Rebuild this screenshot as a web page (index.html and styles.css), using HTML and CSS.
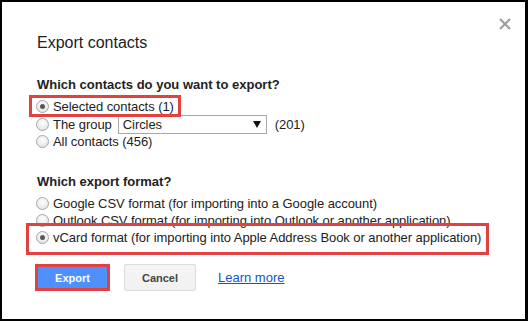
FILE: index.html
```html
<!DOCTYPE html>
<html>
<head>
<meta charset="utf-8">
<link rel="stylesheet" href="styles.css">
</head>
<body>
<div class="dialog">
  <div class="header">
    <div class="title">Export contacts</div>
    <svg class="close" width="12" height="12" viewBox="0 0 12 12"><path d="M1 1L11 11M11 1L1 11" stroke="#9e9e9e" stroke-width="2.2"/></svg>
  </div>

  <div class="heading first">Which contacts do you want to export?</div>
  <div class="options first">
    <div class="row">
      <label class="opt"><span class="radio on"></span>Selected contacts (1)<span class="mark m1"></span></label>
    </div>
    <div class="row group">
      <label class="opt"><span class="radio"></span>The group</label>
      <span class="select"><span>Circles</span><svg width="8" height="7" viewBox="0 0 8 7"><path d="M0 0H8L4 7Z" fill="#111"/></svg></span>
      <span class="count">(201)</span>
    </div>
    <div class="row">
      <label class="opt"><span class="radio"></span>All contacts (456)</label>
    </div>
  </div>

  <div class="heading second">Which export format?</div>
  <div class="options second">
    <div class="row">
      <label class="opt"><span class="radio"></span>Google CSV format (for importing into a Google account)</label>
    </div>
    <div class="row">
      <label class="opt"><span class="radio"></span>Outlook CSV format (for importing into Outlook or another application)</label>
    </div>
    <div class="row">
      <label class="opt"><span class="radio on"></span>vCard format (for importing into Apple Address Book or another application)<span class="mark m2"></span></label>
    </div>
  </div>

  <div class="buttons">
    <button class="btn primary">Export</button>
    <button class="btn">Cancel</button>
    <a class="link" href="#">Learn more</a>
  </div>
</div>
</body>
</html>
```

FILE: styles.css
```css
html, body {
  margin: 0;
  padding: 0;
  background: #000;
}
body {
  width: 528px;
  height: 321px;
  overflow: hidden;
  font-family: "Liberation Sans", Arial, sans-serif;
  font-size: 13px;
  color: #222;
}
.dialog {
  margin: 2px 3px 2px 2px;
  height: 317px;
  box-sizing: border-box;
  background: #fff;
  padding: 16px 0 0 35px;
}
.header {
  display: flex;
  justify-content: space-between;
  align-items: flex-start;
}
.title {
  margin-top: 15px;
  font-size: 16px;
  line-height: 20px;
  color: #222;
}
.close {
  margin-top: 0;
  margin-right: 14px;
}
.heading {
  font-weight: bold;
  line-height: 17px;
}
.heading.first { margin-top: 23px; }
.heading.second { margin-top: 23px; }
.options {
  display: flex;
  flex-direction: column;
  letter-spacing: -0.06px;
}
.options.first { margin-top: 5px; }
.options.second { margin-top: 5px; }
.row {
  height: 17px;
  line-height: 17px;
  display: flex;
  align-items: center;
}
.row.group { height: 18px; }
.opt {
  position: relative;
  display: inline-flex;
  align-items: center;
  margin-left: -1px;
  white-space: nowrap;
}
.radio {
  position: relative;
  width: 13px;
  height: 13px;
  box-sizing: border-box;
  border: 1px solid #a8a8a8;
  border-radius: 50%;
  background: radial-gradient(circle at 50% 35%, #fdfdfd 0%, #ececec 60%, #d8d8d8 100%);
  margin-right: 4px;
  flex: none;
}
.radio.on::after {
  content: "";
  position: absolute;
  left: 3px;
  top: 3px;
  width: 5px;
  height: 5px;
  border-radius: 50%;
  background: #585858;
}
.select {
  margin-left: 6px;
  width: 149px;
  height: 19px;
  box-sizing: border-box;
  border: 1px solid #a9a9a9;
  background: #fff;
  display: inline-flex;
  align-items: center;
  justify-content: space-between;
  padding: 0 5px 0 4px;
  line-height: 17px;
}
.count {
  margin-left: 8px;
}
.mark {
  position: absolute;
  border: 3px solid #e14141;
  pointer-events: none;
}
.m1 { left: -7px; right: -7px; top: -3px; bottom: -2px; }
.m2 { left: -10px; right: -8px; top: -6px; bottom: -9px; }
.buttons {
  margin-top: 18px;
  margin-left: -2px;
  display: flex;
  align-items: center;
}
.btn {
  height: 27px;
  min-width: 72px;
  box-sizing: border-box;
  padding: 0 8px;
  font-family: "Liberation Sans", Arial, sans-serif;
  font-size: 11px;
  font-weight: bold;
  color: #444;
  background: linear-gradient(#f5f5f5, #f1f1f1);
  border: 1px solid #dcdcdc;
  border-radius: 2px;
  margin: 0 14px 0 0;
}
.btn.primary {
  width: 75px;
  color: #fff;
  background: #4d90fe;
  border: 3px solid #e14141;
  border-radius: 0;
}
.link {
  margin-left: 8px;
  color: #1155cc;
  text-decoration: underline;
  font-size: 13px;
}
```
